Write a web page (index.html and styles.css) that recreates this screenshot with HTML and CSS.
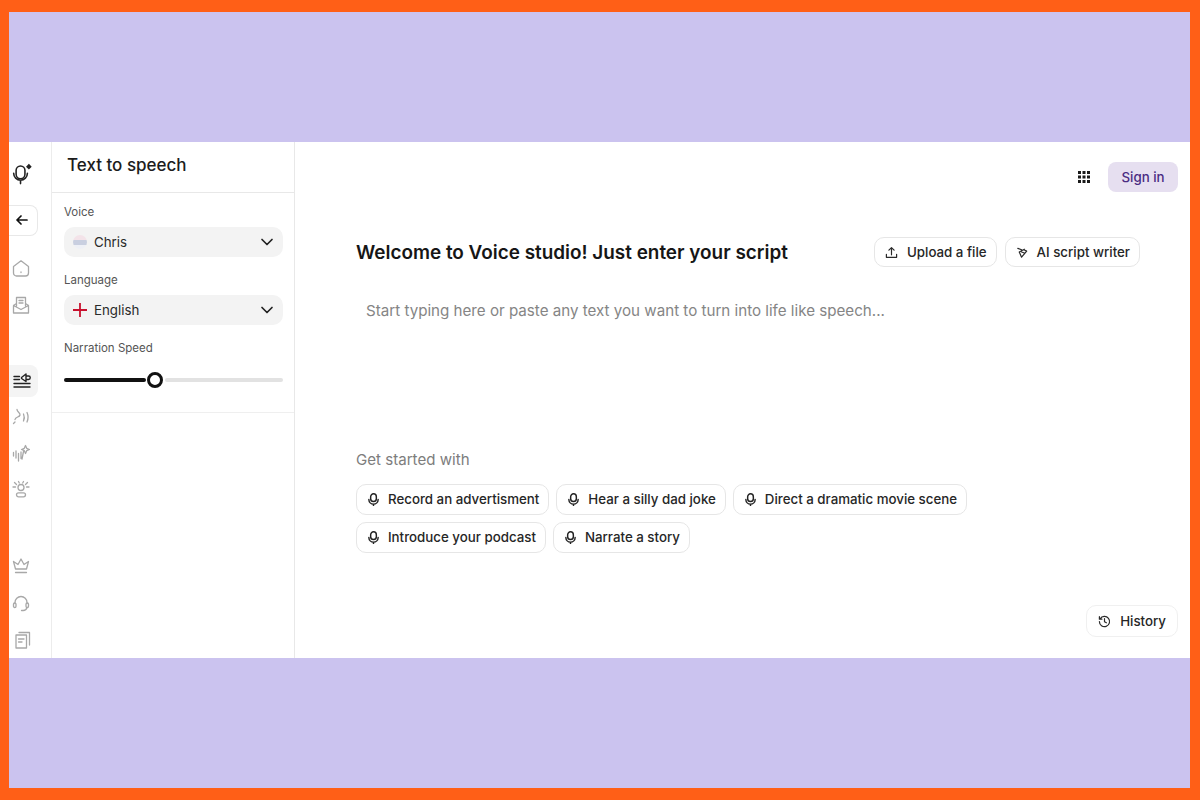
FILE: index.html
```html
<!DOCTYPE html>
<html lang="en">
<head>
<meta charset="utf-8">
<title>Text to speech</title>
<link rel="stylesheet" href="styles.css">
</head>
<body>
<svg class="defs" width="0" height="0" aria-hidden="true">
  <symbol id="mic" viewBox="0 0 16 16">
    <rect x="4.500" y="1" width="7" height="9.500" rx="3.500" fill="none" stroke="currentColor" stroke-width="1.800"/>
    <path d="M2.300 8a5.700 5.700 0 0 0 11.400 0M8 13.700v1.800" fill="none" stroke="currentColor" stroke-width="1.800" stroke-linecap="round"/>
  </symbol>
  <symbol id="chev" viewBox="0 0 14 14">
    <path d="M2 4.500l5 5 5-5" fill="none" stroke="currentColor" stroke-width="1.700" stroke-linecap="round" stroke-linejoin="round"/>
  </symbol>
</svg>
<div class="frame">
  <div class="band"></div>
  <div class="app">
    <nav class="rail">
      <svg class="logo" width="22" height="22" viewBox="0 0 22 22"><rect x="5" y="3" width="9" height="13" rx="4.500" fill="none" stroke="#222" stroke-width="1.600"/><path d="M2.500 10.500a7 7 0 0 0 14 0M9.500 17.500v3.500" fill="none" stroke="#222" stroke-width="1.600" stroke-linecap="round"/><path d="M18 .8l2.900 2.900L18 6.600l-2.900-2.900z" fill="#222"/></svg>
      <button class="back"><svg width="12" height="10" viewBox="0 0 12 10"><path d="M5 1L1 5l4 4M1.500 5H11" fill="none" stroke="#111" stroke-width="1.700" stroke-linecap="round" stroke-linejoin="round"/></svg></button>
      <div class="group first">
        <div class="item"><svg width="18" height="18" viewBox="0 0 18 18" class="ico"><path d="M1.500 7.500L9 1.800l7.500 5.700V14a3 3 0 0 1-3 3h-9a3 3 0 0 1-3-3zM9 13v.5"/></svg></div>
        <div class="item"><svg width="18" height="18" viewBox="0 0 18 18" class="ico"><path d="M4.500 7.500L1.500 9.500V17h15V9.500l-3-2M1.500 9.500L9 13.500l7.500-4M4.500 10V1.500h9V10M7 4.500h4M7 7h4"/></svg></div>
      </div>
      <div class="group tools">
        <div class="item active"><svg width="18" height="16" viewBox="0 0 18 16" class="ico dark"><path d="M1 3.500h5.500M1 6.500h5.500M1 10.500h16M1 14h16M8.500 4.500L13 1v7.500L8.500 5.500zM13 3h2.500a1.500 1.500 0 0 1 0 3.500H13"/></svg></div>
        <div class="item"><svg width="18" height="18" viewBox="0 0 18 18" class="ico"><path d="M5 1.500c0 2.500 3.500 3 3 5.500S3.500 8.500 3 11.500M1.500 15.500l1.500-1.500M11.500 6c.9 2 .9 5 0 7M15 4.500c1.300 2.800 1.300 6.500 0 9.500"/></svg></div>
        <div class="item"><svg width="18" height="18" viewBox="0 0 18 18" class="ico"><path d="M1.500 8.500v3.500M4 7v7M6.500 9.500V17M9 8v6.500M11.500 7.500L10 15"/><path d="M13.500 1.500l1.200 2.800 2.800 1.200-2.800 1.200-1.200 2.800-1.200-2.800-2.800-1.200 2.800-1.200z"/></svg></div>
        <div class="item"><svg width="18" height="18" viewBox="0 0 18 18" class="ico"><circle cx="9" cy="7.500" r="3"/><rect x="4.500" y="12.800" width="9" height="4" rx="2"/><path d="M2.500 2.500l2 2M1 7h2.500M15.500 2.500l-2 2M17 7h-2.500M6.500 1.500l.8 1.500M11.500 1.500l-.8 1.500"/></svg></div>
      </div>
      <div class="group lower">
        <div class="item tight"><svg width="18" height="18" viewBox="0 0 18 18" class="ico"><path d="M3.500 12L1.500 4.500 6 7.500 9 2l3 5.500 4.500-3-2 7.500zM3.500 15.500h11"/></svg></div>
        <div class="item tight"><svg width="18" height="18" viewBox="0 0 18 18" class="ico"><path d="M3 9.500V8.500a6 6 0 0 1 12 0v1M15 13.500a4 4 0 0 1-4 3H9.500"/><rect x="1.500" y="9" width="2.500" height="4.500" rx="1.200"/><rect x="14" y="9" width="2.500" height="4.500" rx="1.200"/></svg></div>
        <div class="item tight doc"><svg width="16" height="18" viewBox="0 0 16 18" class="ico"><rect x="1" y="4" width="10.500" height="13"/><path d="M4 1.500h10.500v12.500M3.500 8h5.500M3.500 11h3.500"/></svg></div>
      </div>
    </nav>

    <aside class="panel">
      <header class="panel-head"><h1>Text to speech</h1></header>
      <section class="controls">
        <label class="lbl">Voice</label>
        <div class="select">
          <span class="avatar"></span>
          <span class="val">Chris</span>
          <svg class="chev" width="14" height="14"><use href="#chev"/></svg>
        </div>
        <label class="lbl">Language</label>
        <div class="select">
          <svg class="flag" width="14" height="14" viewBox="0 0 14 14"><path d="M7 0v14M0 7h14" stroke="#c8102e" stroke-width="1.800"/></svg>
          <span class="val">English</span>
          <svg class="chev" width="14" height="14"><use href="#chev"/></svg>
        </div>
        <label class="lbl">Narration Speed</label>
        <div class="slider">
          <span class="fill"></span>
          <span class="thumb"></span>
          <span class="rest"></span>
        </div>
      </section>
    </aside>

    <main class="main">
      <div class="top">
        <svg class="apps" width="12" height="12" viewBox="0 0 12 12" fill="#1a1a1a"><rect x="0" y="0" width="3" height="3"/><rect x="4.500" y="0" width="3" height="3"/><rect x="9" y="0" width="3" height="3"/><rect x="0" y="4.500" width="3" height="3"/><rect x="4.500" y="4.500" width="3" height="3"/><rect x="9" y="4.500" width="3" height="3"/><rect x="0" y="9" width="3" height="3"/><rect x="4.500" y="9" width="3" height="3"/><rect x="9" y="9" width="3" height="3"/></svg>
        <button class="signin">Sign in</button>
      </div>
      <div class="content">
        <div class="title-row">
          <h2>Welcome to Voice studio! Just enter your script</h2>
          <div class="actions">
            <button class="pill act"><svg width="13" height="13" viewBox="0 0 14 14" class="pi"><path d="M7 9.500V2M4.200 4.500L7 1.700l2.800 2.800M1.500 9v3.200h11V9"/></svg>Upload a file</button>
            <button class="pill act"><svg width="13" height="13" viewBox="0 0 14 14" class="pi"><path d="M2 2.500l4 1.500M9 3.500L3.500 6.500l2.500 5.500 5.500-6.500-3-1.500M6 6.500l3 1"/></svg>AI script writer</button>
          </div>
        </div>
        <p class="placeholder">Start typing here or paste any text you want to turn into life like speech...</p>
        <p class="started">Get started with</p>
        <div class="chips">
          <div class="chip-row">
            <button class="pill chip"><svg width="13" height="13"><use href="#mic"/></svg>Record an advertisment</button>
            <button class="pill chip"><svg width="13" height="13"><use href="#mic"/></svg>Hear a silly dad joke</button>
            <button class="pill chip"><svg width="13" height="13"><use href="#mic"/></svg>Direct a dramatic movie scene</button>
          </div>
          <div class="chip-row">
            <button class="pill chip"><svg width="13" height="13"><use href="#mic"/></svg>Introduce your podcast</button>
            <button class="pill chip"><svg width="13" height="13"><use href="#mic"/></svg>Narrate a story</button>
          </div>
        </div>
      </div>
      <div class="bottom">
        <button class="pill history"><svg width="13" height="13" viewBox="0 0 14 14" class="pi"><path d="M2.300 4.200A5.500 5.500 0 1 1 1.500 7M1.500 1.800v2.700h2.700M7 4v3.200l2 1.200"/></svg>History</button>
      </div>
    </main>
  </div>
  <div class="band"></div>
</div>
</body>
</html>
```
FILE: styles.css
```css
* { box-sizing: border-box; }
html, body { margin: 0; height: 100%; }
body {
  background: #ff5f17;
  padding: 12px 10px 12px 9px;
  font-family: Inter, "Liberation Sans", sans-serif;
  color: #1c1c1c;
  overflow: hidden;
}
.defs { position: absolute; }
.frame { height: 776px; display: flex; flex-direction: column; }
.band { height: 130px; background: #cbc3ef; }
.app { height: 516px; display: flex; background: #fff; }

/* Icon rail */
.rail {
  width: 43px;
  flex: none;
  display: flex;
  flex-direction: column;
  align-items: flex-start;
  border-right: 1px solid #ececec;
}
.logo { margin: 21px 0 0 2px; display: block; }
.back {
  margin-top: 20px;
  width: 29px;
  height: 32px;
  padding: 0 0 0 7px;
  display: flex;
  align-items: center;
  background: #fff;
  border: 1px solid #e8e8e8;
  border-left: 0;
  border-radius: 0 8px 8px 0;
}
.group { width: 29px; display: flex; flex-direction: column; }
.group.first { margin-top: 14px; gap: 1px; }
.group.tools { margin-top: 40px; }
.group.lower { margin-top: 41px; gap: 1px; }
.item { height: 36px; display: flex; align-items: center; padding-left: 3px; }
.item.active { height: 32px; margin: 2px 0; padding-left: 4px; background: #f4f4f4; border-radius: 0 8px 8px 0; }
.item.doc { padding-left: 6px; }
.ico { fill: none; stroke: #a8a8a8; stroke-width: 1.300; stroke-linecap: round; stroke-linejoin: round; }
.ico.dark { stroke: #222; stroke-width: 1.400; }

/* Settings panel */
.panel { width: 243px; flex: none; border-right: 1px solid #e8e8e8; }
.panel-head { height: 51px; padding: 13px 0 0 15px; border-bottom: 1px solid #e8e8e8; }
h1 { margin: 0; font-size: 17px; line-height: 21px; font-weight: 500; }
.controls {
  height: 220px;
  padding: 12px 11px 0 12px;
  display: flex;
  flex-direction: column;
  border-bottom: 1px solid #efefef;
}
.lbl { font-size: 11.500px; line-height: 14px; color: #555; }
.select {
  height: 30px;
  margin: 8px 0 16px;
  padding: 0 9px;
  display: flex;
  align-items: center;
  background: #f3f3f3;
  border-radius: 10px;
  color: #2a2a2a;
}
.val { flex: 1; margin-left: 7px; font-size: 13.300px; line-height: 30px; height: 30px; }
.chev { color: #222; }
.avatar {
  width: 14px;
  height: 14px;
  border-radius: 50%;
  background: linear-gradient(#f3e3e9 0 35%, #c9cfe0 35% 70%, #eef0f6 70%);
}
.flag { display: block; }
.slider { margin-top: 17px; height: 16px; display: flex; align-items: center; }
.fill { width: 82px; height: 4px; background: #111; border-radius: 2px; }
.thumb { width: 16px; height: 16px; margin-left: 1px; border: 3px solid #111; border-radius: 50%; background: #fff; flex: none; }
.rest { flex: 1; height: 4px; margin-left: 2px; background: #e2e2e2; border-radius: 2px; }

/* Main */
.main { flex: 1; min-width: 0; display: flex; flex-direction: column; padding: 20px 12px 21px 0; }
.top { display: flex; align-items: center; justify-content: flex-end; gap: 18px; height: 30px; }
.signin {
  width: 70px;
  height: 30px;
  padding: 0;
  border: 0;
  border-radius: 8px;
  background: #e6dff0;
  color: #4a2c82;
  font: 500 13.300px Inter, "Liberation Sans", sans-serif;
}
.content { padding: 45px 38px 0 61px; }
.title-row { display: flex; align-items: center; justify-content: space-between; height: 30px; }
h2 { margin: 0; font-size: 18.900px; font-weight: 600; color: #161616; }
.actions { display: flex; gap: 8px; }
.pill {
  display: flex;
  align-items: center;
  background: #fff;
  border: 1px solid #e6e6e6;
  border-radius: 10px;
  font: 500 13.300px Inter, "Liberation Sans", sans-serif;
  color: #262626;
  white-space: nowrap;
}
.pi { fill: none; stroke: #2a2a2a; stroke-width: 1.300; stroke-linecap: round; stroke-linejoin: round; flex: none; }
.act { height: 30px; padding: 0 9px 0 10px; gap: 9px; }
.act + .act { gap: 8px; }
.placeholder { margin: 34px 0 0 10px; font-size: 15.150px; line-height: 20px; color: #858585; }
.started { margin: 129px 0 0; font-size: 15.100px; line-height: 20px; color: #7d7d7d; }
.chips { margin-top: 14px; display: flex; flex-direction: column; gap: 7px; }
.chip-row { display: flex; gap: 7px; }
.chip { height: 31px; padding: 0 9px 1px 10px; gap: 8px; }
.chip svg { color: #222; flex: none; }
.bottom { margin-top: auto; display: flex; justify-content: flex-end; }
.history { height: 32px; padding: 0 11px; gap: 9px; border-color: #f0f0f0; }
```
